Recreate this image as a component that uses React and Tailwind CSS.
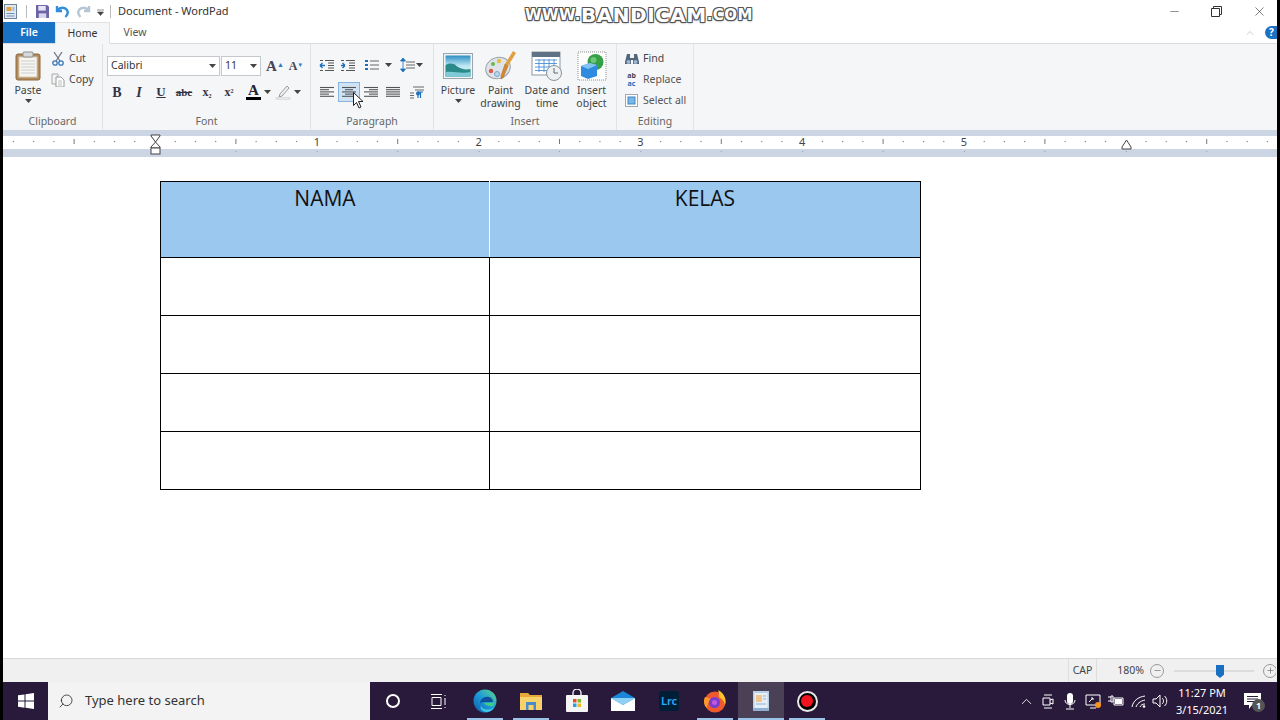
import React from 'react';
import { ChevronUp, Minus, Plus, Search, X } from 'lucide-react';

const ui = { fontFamily: '"Noto Sans", "Open Sans", sans-serif' };

function Caret({ className = '' }) {
  return (
    <svg width="7" height="4" viewBox="0 0 7 4" className={className}>
      <path d="M0 0h7L3.5 4z" fill="#444" />
    </svg>
  );
}

function Lines({ rows, color = '#555', w = 14 }) {
  return (
    <svg width={w} height="14" viewBox={`0 0 ${w} 14`}>
      {rows.map((r, i) => (
        <path key={i} d={`M${r[0]} ${2.5 + i * 2.2}H${r[1]}`} stroke={color} strokeWidth="1.1" />
      ))}
    </svg>
  );
}

function AlignIcon({ kind }) {
  const rows = {
    left: [[0, 14], [0, 9], [0, 14], [0, 9], [0, 14]],
    center: [[0, 14], [3, 11], [0, 14], [3, 11], [0, 14]],
    right: [[0, 14], [5, 14], [0, 14], [5, 14], [0, 14]],
    justify: [[0, 14], [0, 14], [0, 14], [0, 14], [0, 14]],
  }[kind];
  return <Lines rows={rows} />;
}

function Indent({ flip }) {
  return (
    <svg width="16" height="14" viewBox="0 0 16 14">
      <path d="M6 2.5h9M9 5h6M9 7.5h6M9 10h6M6 12.5h9M1 2.5h3M1 12.5h3" stroke="#555" strokeWidth="1" />
      <path d={flip ? 'M1 7.5h4M5 7.5L2.5 5M5 7.5L2.5 10' : 'M6 7.5H1M1 7.5L3.5 5M1 7.5L3.5 10'} stroke="#1c6fbd" strokeWidth="1.4" fill="none" />
    </svg>
  );
}

function ToolBtn({ children, w = 'w-[22px]', active }) {
  return (
    <div
      className={`flex h-5 shrink-0 items-center justify-center ${w} ${
        active ? 'border border-[#86b4dc] bg-[#cfe3f5]' : ''
      }`}
    >
      {children}
    </div>
  );
}

function GroupLabel({ children }) {
  return <div className="mt-auto pb-[2px] text-center text-[10.5px] leading-[14px] text-[#666]">{children}</div>;
}

function LargeButton({ icon, lines, caret, w }) {
  return (
    <div className={`flex shrink-0 flex-col items-center ${w}`}>
      <div className="flex h-[32px] items-center justify-center">{icon}</div>
      <div className="mt-[2px] text-center text-[10.5px] leading-[13px] text-[#444]">
        {lines.map((l) => (
          <div key={l}>{l}</div>
        ))}
        {caret && <Caret className="mx-auto mt-[2px]" />}
      </div>
    </div>
  );
}

function ClipboardIcon() {
  return (
    <svg width="26" height="30" viewBox="0 0 26 30">
      <rect x="1" y="3" width="24" height="26" rx="2" fill="#b48a58" stroke="#8c6a40" />
      <rect x="4" y="6" width="18" height="20" fill="#f7f5ee" stroke="#cfc8b8" />
      <path d="M6 10h14M6 13h14M6 16h14M6 19h14M6 22h14" stroke="#c9ced6" />
      <rect x="8" y="1" width="10" height="5" rx="1" fill="#d6d8da" stroke="#8f8f8f" />
    </svg>
  );
}

function PictureIcon() {
  return (
    <svg width="30" height="26" viewBox="0 0 30 26">
      <defs>
        <linearGradient id="sky" x1="0" y1="0" x2="0" y2="1">
          <stop offset="0" stopColor="#2f8fc4" />
          <stop offset="0.5" stopColor="#bfe8f2" />
          <stop offset="1" stopColor="#d9f2f2" />
        </linearGradient>
      </defs>
      <rect x="0.5" y="0.5" width="29" height="25" fill="#f2f4f5" stroke="#9aa5ad" />
      <rect x="2.500" y="2.500" width="25" height="21" fill="url(#sky)" />
      <path d="M2.500 12c4-2 8-2 11 1 4 3 9 4 14 3v7.500h-25z" fill="#2a8a8a" />
      <path d="M2.500 19c8-1 16 2 25 0v4.500h-25z" fill="#7fcad6" />
    </svg>
  );
}

function PaletteIcon() {
  return (
    <svg width="32" height="30" viewBox="0 0 32 30">
      <ellipse cx="13" cy="17" rx="12.500" ry="10.500" transform="rotate(-20 13 17)" fill="#dde3e8" stroke="#9aa2a8" />
      <circle cx="6" cy="20" r="2.200" fill="#e05a4a" />
      <circle cx="8" cy="13" r="2" fill="#6db84c" />
      <circle cx="14" cy="10" r="2.200" fill="#e8c040" />
      <circle cx="12" cy="23" r="2.500" fill="#bcd7ee" stroke="#7fa6c8" />
      <path d="M28 0l3 2-8 13-3-2z" fill="#e0a040" />
      <path d="M20 13l3 2-5 12-2 1 0-3z" fill="#d8882c" stroke="#a96a20" strokeWidth="0.5" />
    </svg>
  );
}

function DateIcon() {
  return (
    <svg width="32" height="30" viewBox="0 0 32 30">
      <rect x="1" y="1" width="28" height="23" fill="#fff" stroke="#8b98a4" />
      <rect x="1" y="1" width="28" height="5" fill="#5f7285" />
      <path d="M4 9h22M4 12.500h22M4 16h22M4 19.500h22M8 8v13M13 8v13M18 8v13M23 8v13" stroke="#4a8fd8" strokeWidth="0.9" />
      <circle cx="23" cy="22" r="7.500" fill="#eef1f3" stroke="#8b929a" />
      <path d="M23 17v5h4" stroke="#666" fill="none" />
    </svg>
  );
}

function ObjectIcon() {
  return (
    <svg width="30" height="30" viewBox="0 0 30 30">
      <rect x="1" y="1" width="28" height="28" fill="#fff" stroke="#8d8d8d" strokeDasharray="1 1" />
      <circle cx="18.500" cy="11" r="8" fill="#35a045" />
      <circle cx="16.500" cy="9" r="3" fill="#6cc878" />
      <path d="M4 15l9-3 7 2v11l-9 3-7-3z" fill="#2f8be0" />
      <path d="M4 15l7 3 9-4-7-2z" fill="#84c4f2" />
    </svg>
  );
}

function Ruler() {
  const x0 = 152;
  const inch = 161.8;
  const ticks = [];
  for (let i = -8; i <= 55; i++) {
    if (i % 8 === 0) continue;
    const x = x0 + (i * inch) / 8;
    if (x < 0 || x > 1274) continue;
    if (i % 4 === 0) ticks.push(<path key={i} d={`M${x} 9v5`} stroke="#777" />);
    else ticks.push(<circle key={i} cx={x} cy="11.5" r="0.7" fill="#888" />);
  }
  return (
    <svg width="1274" height="27" viewBox="0 0 1274 27" className="block">
      <rect width="1274" height="27" fill="#ccd5e3" />
      <rect y="6" width="1274" height="13" fill="#fff" />
      {ticks}
      {[1, 2, 3, 4, 5].map((n) => (
        <text key={n} x={x0 + n * inch} y="16" textAnchor="middle" fontSize="11" fill="#444" style={ui}>
          {n}
        </text>
      ))}
      {[0, 1, 2, 3, 4, 5, 6].map((n) => (
        <path key={n} d={`M${x0 + n * inch + 0.5} 21v1M${x0 + (n + 0.5) * inch} 21v1`} stroke="#99a" />
      ))}
      <path d="M148 5h9v1l-4.5 6-4.5-6z" fill="#fff" stroke="#444" />
      <path d="M148 18v-1l4.5-5 4.5 5v1z" fill="#fff" stroke="#444" />
      <rect x="148" y="18" width="9" height="6" fill="#fff" stroke="#444" />
      <path d="M1119 19v-2l4.5-7 4.5 7v2z" fill="#fff" stroke="#444" />
    </svg>
  );
}

function TitleBar() {
  return (
    <div className="flex h-[22px] items-center bg-white">
      <svg width="13" height="15" viewBox="0 0 13 15" className="ml-[1px]">
        <rect x="0.5" y="0.5" width="12" height="14" fill="#dfe9f4" stroke="#6f8197" />
        <rect x="2.500" y="3" width="5" height="4" fill="#e0a13d" />
        <path d="M2.500 9.500h8M2.500 12h8M8.500 4h2M8.500 6h2" stroke="#6f8fb4" />
      </svg>
      <div className="ml-[9px] h-[13px] w-px bg-[#bbb]" />
      <svg width="13" height="13" viewBox="0 0 14 14" className="ml-[9px]">
        <path d="M0 0h12l2 2v12H0z" fill="#6b62a8" />
        <rect x="2.5" y="1" width="8" height="5" fill="#e6e6f2" />
        <rect x="3" y="9" width="8" height="5" fill="#d7d5ea" />
      </svg>
      <svg width="15" height="14" viewBox="0 0 15 14" className="ml-[6px]">
        <path d="M2 2v5h5M2.500 6.500C5 3 10 3 12 6c1.500 2.500.5 5-1.500 7" stroke="#2f8fdc" strokeWidth="2.400" fill="none" />
      </svg>
      <svg width="15" height="14" viewBox="0 0 15 14" className="ml-[6px]">
        <path d="M13 2v5H8M12.500 6.500C10 3 5 3 3 6c-1.500 2.500-.5 5 1.500 7" stroke="#b7c6d4" strokeWidth="2.400" fill="none" />
      </svg>
      <svg width="7" height="7" viewBox="0 0 7 7" className="ml-[6px] mt-[2px]">
        <path d="M0 1h7M0.500 3h6l-3 3.500z" fill="#444" stroke="#444" strokeWidth="0.6" />
      </svg>
      <div className="ml-[6px] h-[13px] w-px bg-[#bbb]" />
      <div className="ml-[7px] text-[11px] text-[#333]">Document - WordPad</div>
      <div className="ml-auto flex items-center">
        <div className="flex w-[42px] justify-center">
          <Minus size={13} strokeWidth={1.2} color="#555" />
        </div>
        <div className="flex w-[42px] justify-center">
          <svg width="11" height="11" viewBox="0 0 11 11">
            <path d="M2.500 2.500V.5h8v8H8.500M.5 2.500h8v8h-8z" fill="none" stroke="#333" />
          </svg>
        </div>
        <div className="ml-[4px] flex w-[36px] justify-center">
          <X size={15} strokeWidth={1} color="#333" />
        </div>
      </div>
    </div>
  );
}

function Tabs() {
  return (
    <div className="flex h-[22px] items-stretch border-b border-[#dadbdc] bg-white text-[10.5px]">
      <div className="flex w-[52px] items-center justify-center bg-[#1a72c4] font-semibold text-white">File</div>
      <div className="mb-[-1px] flex w-[55px] items-center justify-center border-x border-t border-[#e1e2e3] bg-[#f5f6f7] text-[#333]">
        Home
      </div>
      <div className="flex w-[50px] items-center justify-center text-[#555]">View</div>
      <div className="ml-auto flex items-center gap-[9px]">
        <ChevronUp size={12} strokeWidth={1.2} color="#aaa" />
        <div className="flex h-[13px] w-[12px] items-center justify-center overflow-hidden rounded-l-full bg-[#1b72c2] pl-[1px] text-[10px] font-bold text-white">
          ?
        </div>
      </div>
    </div>
  );
}

function RibbonGroup({ w, children, label }) {
  return (
    <div className={`flex h-full shrink-0 flex-col border-r border-[#e2e3e4] ${w}`}>
      <div className="min-h-0">{children}</div>
      <GroupLabel>{label}</GroupLabel>
    </div>
  );
}

function SmallCmd({ icon, label, muted }) {
  return (
    <div className={`flex h-[21px] items-center gap-[4px] text-[10.5px] ${muted ? 'text-[#555]' : 'text-[#444]'}`}>
      <span className="flex w-[15px] justify-center">{icon}</span>
      {label}
    </div>
  );
}

function Ribbon() {
  return (
    <div className="flex h-[86px] bg-[#f5f6f7]">
      <RibbonGroup w="w-[100px]" label="Clipboard">
        <div className="flex pl-[10px] pt-[6px]">
          <LargeButton w="w-[30px]" icon={<ClipboardIcon />} lines={['Paste']} caret />
          <div className="ml-[7px] -mt-[2px]">
            <SmallCmd
              label="Cut"
              icon={
                <svg width="12" height="14" viewBox="0 0 12 14">
                  <path d="M2 0l6 9M10 0L4 9" stroke="#778" strokeWidth="1.300" />
                  <circle cx="3" cy="11" r="2.200" fill="none" stroke="#3a78b8" strokeWidth="1.300" />
                  <circle cx="9" cy="11" r="2.200" fill="none" stroke="#3a78b8" strokeWidth="1.300" />
                </svg>
              }
            />
            <SmallCmd
              label="Copy"
              icon={
                <svg width="14" height="14" viewBox="0 0 14 14">
                  <path d="M1 1h6v10H1z" fill="#f4f4f4" stroke="#aaa" />
                  <path d="M5 4h5l3 3v7H5z" fill="#fff" stroke="#999" />
                  <path d="M7 8h4M7 10h4M7 12h4" stroke="#bbb" />
                </svg>
              }
            />
          </div>
        </div>
      </RibbonGroup>

      <RibbonGroup w="w-[208px]" label="Font">
        <div className="pl-[4px] pt-[12px]">
          <div className="flex h-[20px] items-center">
            <div className="flex h-[20px] w-[113px] items-center justify-between border border-[#c5c9cd] bg-white pl-[3px] pr-[3px] text-[10.5px] text-[#333]">
              Calibri
              <Caret />
            </div>
            <div className="ml-[1px] flex h-[20px] w-[40px] items-center justify-between border border-[#c5c9cd] bg-white pl-[3px] pr-[3px] text-[10.5px] text-[#333]">
              11
              <Caret />
            </div>
            <div className="ml-[4px] w-[20px] text-center font-['Liberation_Serif',serif] text-[15px] font-bold text-[#445]">
              A<sup className="text-[7px] text-[#2b7bc0]">▲</sup>
            </div>
            <div className="ml-[1px] w-[20px] text-center font-['Liberation_Serif',serif] text-[12px] font-bold text-[#445]">
              A<sup className="text-[6px] text-[#2b7bc0]">▼</sup>
            </div>
          </div>
          <div className="-ml-[1px] mt-[6px] flex h-5 items-center font-['Liberation_Serif',serif] text-[#334]">
            <ToolBtn><span className="text-[14px] font-bold">B</span></ToolBtn>
            <ToolBtn><span className="text-[14px] font-bold italic">I</span></ToolBtn>
            <ToolBtn><span className="text-[13px] font-bold underline">U</span></ToolBtn>
            <ToolBtn w="w-[24px]"><span className="text-[11px] font-bold line-through">abc</span></ToolBtn>
            <ToolBtn><span className="text-[12px] font-bold">x<sub className="text-[6px]">2</sub></span></ToolBtn>
            <ToolBtn><span className="text-[12px] font-bold">x<sup className="text-[6px]">2</sup></span></ToolBtn>
            <div className="ml-[1px] flex w-[32px] items-center gap-[3px] pl-[5px]">
              <div className="flex flex-col items-center">
                <span className="text-[15px] font-bold leading-[13px] text-[#223]">A</span>
                <div className="h-[3px] w-[15px] bg-black" />
              </div>
              <Caret />
            </div>
            <div className="ml-[2px] flex items-center gap-[3px]">
              <svg width="16" height="16" viewBox="0 0 16 16">
                <path d="M5 10l7-8 2 2-7 8-3 1z" fill="#f2f2f2" stroke="#9a9a9a" />
                <rect x="1" y="13.500" width="14" height="2" fill="#e9e9e9" stroke="#ccc" strokeWidth="0.5" />
              </svg>
              <Caret />
            </div>
          </div>
        </div>
      </RibbonGroup>

      <RibbonGroup w="w-[123px]" label="Paragraph">
        <div className="pl-[5px] pt-[11px]">
          <div className="flex h-5 items-center">
            <ToolBtn w="w-[21px]"><Indent /></ToolBtn>
            <ToolBtn w="w-[21px]"><Indent flip /></ToolBtn>
            <div className="ml-[4px] flex w-[37px] items-center gap-[6px] pl-[3px]">
              <svg width="14" height="12" viewBox="0 0 14 12">
                <path d="M5 2h9M5 6h9M5 10h9" stroke="#666" />
                <path d="M0 1h3v2H0zM0 5h3v2H0zM0 9h3v2H0z" fill="#1c6fbd" />
              </svg>
              <Caret />
            </div>
            <div className="flex items-center gap-[1px] pl-[1px]">
              <svg width="15" height="14" viewBox="0 0 15 14">
                <path d="M6 4h9M6 7h9M6 10h9" stroke="#666" />
                <path d="M3 0l2.500 3h-5zM3 14l2.500-3h-5zM3 3v8" fill="#1c6fbd" stroke="#1c6fbd" strokeWidth="0.8" />
              </svg>
              <Caret />
            </div>
          </div>
          <div className="mt-[7px] flex h-5 items-center">
            <ToolBtn><AlignIcon kind="left" /></ToolBtn>
            <ToolBtn active><AlignIcon kind="center" /></ToolBtn>
            <ToolBtn><AlignIcon kind="right" /></ToolBtn>
            <ToolBtn><AlignIcon kind="justify" /></ToolBtn>
            <ToolBtn w="w-[26px]">
              <svg width="14" height="14" viewBox="0 0 14 14">
                <path d="M3 2h11M5 5h9M0 8h4M0 10.500h4M0 13h4" stroke="#666" />
                <path d="M8 13V7h5M10.500 13V7" stroke="#1c6fbd" strokeWidth="1.200" fill="none" />
                <circle cx="8" cy="8.500" r="2" fill="#1c6fbd" />
              </svg>
            </ToolBtn>
          </div>
        </div>
      </RibbonGroup>

      <RibbonGroup w="w-[183px]" label="Insert">
        <div className="flex pl-[2px] pt-[6px]">
          <LargeButton w="w-[44px]" icon={<PictureIcon />} lines={['Picture']} caret />
          <LargeButton w="w-[41px]" icon={<PaletteIcon />} lines={['Paint', 'drawing']} />
          <LargeButton w="w-[52px]" icon={<DateIcon />} lines={['Date and', 'time']} />
          <LargeButton w="w-[37px]" icon={<ObjectIcon />} lines={['Insert', 'object']} />
        </div>
      </RibbonGroup>

      <RibbonGroup w="w-[77px]" label="Editing">
        <div className="pl-[7px] pt-[4px]">
          <SmallCmd
            label="Find"
            icon={
              <svg width="14" height="12" viewBox="0 0 14 12">
                <path d="M2 1h3v4h4V1h3l2 8v2H8V7H6v4H0V9z" fill="#51657c" />
                <circle cx="3.500" cy="9" r="2" fill="#9fb8cf" />
                <circle cx="10.500" cy="9" r="2" fill="#9fb8cf" />
              </svg>
            }
          />
          <SmallCmd
            muted
            label="Replace"
            icon={
              <span className="flex flex-col items-center text-[7px] font-bold text-[#445]">
                <span className="h-[8px] leading-[8px]">ab</span>
                <span className="h-[8px] leading-[8px] text-[#1c6fbd]">ac</span>
              </span>
            }
          />
          <SmallCmd
            muted
            label="Select all"
            icon={
              <svg width="13" height="13" viewBox="0 0 13 13">
                <rect x="0.500" y="0.500" width="12" height="12" fill="#fff" stroke="#456" strokeDasharray="1 1" />
                <rect x="3" y="3" width="7" height="7" fill="#79b7e6" stroke="#3f86c4" />
              </svg>
            }
          />
        </div>
      </RibbonGroup>
    </div>
  );
}

function DocTable() {
  const rows = [0, 1, 2, 3];
  return (
    <table className="ml-[157px] mt-[24px] w-[761px] table-fixed border-collapse text-[#111]" style={{ fontFamily: '"Open Sans", sans-serif' }}>
      <colgroup>
        <col className="w-[329px]" />
        <col />
      </colgroup>
      <thead>
        <tr className="h-[76px] bg-[#9bc8ee]">
          <th className="border border-black border-r-white pt-[1px] align-top text-[21px] font-normal leading-[30px]">NAMA</th>
          <th className="border border-black pt-[1px] align-top text-[21px] font-normal leading-[30px]">KELAS</th>
        </tr>
      </thead>
      <tbody>
        {rows.map((r) => (
          <tr key={r} className="h-[58px]">
            <td className="border border-black" />
            <td className="border border-black" />
          </tr>
        ))}
      </tbody>
    </table>
  );
}

function StatusBar() {
  return (
    <div className="flex h-[24px] items-stretch justify-end border-t border-[#d8d8d8] bg-[#f0f0f0] text-[10.5px] text-[#444]">
      <div className="flex w-[29px] items-center justify-center border-x border-[#dedede] pt-[1px]">CAP</div>
      <div className="flex w-[47px] items-center justify-end pt-[1px]">180%</div>
      <div className="ml-[6px] flex items-center">
        <div className="flex h-[14px] w-[14px] items-center justify-center rounded-full border border-[#999]">
          <Minus size={9} strokeWidth={1.5} color="#555" />
        </div>
      </div>
      <div className="relative ml-[10px] flex w-[80px] items-center">
        <div className="h-[2px] w-full bg-[#dcdcdc]" />
        <div className="absolute left-[42px] top-[6px] h-[13px] w-[8px] bg-[#1a6fc0] [clip-path:polygon(0_0,100%_0,100%_75%,50%_100%,0_75%)]" />
      </div>
      <div className="ml-[9px] mr-[1px] flex w-[13px] items-center overflow-hidden">
        <div className="flex h-[14px] w-[14px] shrink-0 items-center justify-center rounded-full border border-[#999]">
          <Plus size={9} strokeWidth={1.5} color="#555" />
        </div>
      </div>
    </div>
  );
}

function TaskIcon({ children, indicator, active }) {
  return (
    <div className={`relative flex h-full w-[46px] shrink-0 items-center justify-center ${active ? 'bg-[#4a4156]' : ''}`}>
      {children}
      {indicator && <div className={`absolute bottom-0 h-[2px] bg-[#99c4e8] ${active ? 'inset-x-0' : 'inset-x-[5px]'}`} />}
    </div>
  );
}

function Taskbar() {
  return (
    <div className="flex h-[38px] items-stretch bg-[#291a3b]">
      <div className="flex w-[45px] items-center justify-center">
        <svg width="16" height="16" viewBox="0 0 16 16">
          <path d="M0 2.300L6.500 1.400v6.200H0zM7.500 1.200L16 0v7.600H7.500zM0 8.500h6.500v6.200L0 13.800zM7.500 8.500H16V16l-8.500-1.200z" fill="#fff" />
        </svg>
      </div>
      <div className="flex w-[322px] items-center bg-[#f3f3f3] pl-[10px] text-[13px] text-[#333]">
        <Search size={16} strokeWidth={1.2} color="#222" className="-scale-x-100" />
        <span className="ml-[11px]">Type here to search</span>
      </div>
      <TaskIcon>
        <div className="h-[14px] w-[14px] rounded-full border-2 border-white" />
      </TaskIcon>
      <TaskIcon>
        <svg width="16" height="15" viewBox="0 0 16 15">
          <path d="M0 .5h11M0 14.500h11M1 3.500h9v8H1zM14 1v1M14 4v7M14 13v1" stroke="#fff" fill="none" />
        </svg>
      </TaskIcon>
      <TaskIcon indicator>
        <svg width="24" height="24" viewBox="0 0 24 24">
          <defs>
            <linearGradient id="edge" x1="0" y1="1" x2="1" y2="0">
              <stop offset="0" stopColor="#0e5cab" />
              <stop offset="0.5" stopColor="#1d9bd8" />
              <stop offset="1" stopColor="#5ed98a" />
            </linearGradient>
          </defs>
          <circle cx="12" cy="12" r="11.500" fill="url(#edge)" />
          <path d="M7 15c0-5 4-8 9-7 3 .5 4 3 4 5H10c-1.500 0-3 1-3 2z" fill="#0f4f9c" />
          <path d="M8 17c1 3 6 5 13 2-3 4-8 5-11 3-2-1-3-3-2-5z" fill="#42c8e6" />
          <path d="M11 14h10c0 2-1 3-3 3-3 0-6-1-7-3z" fill="#3fd07f" />
        </svg>
      </TaskIcon>
      <TaskIcon indicator>
        <svg width="22" height="18" viewBox="0 0 22 18">
          <path d="M0 1h8l2 2h12v15H0z" fill="#e8a93a" />
          <path d="M0 5h22v13H0z" fill="#f7d26a" />
          <path d="M6 10h10v8h-2.500v-5h-5v5H6z" fill="#4a8cc9" />
        </svg>
      </TaskIcon>
      <TaskIcon>
        <svg width="22" height="24" viewBox="0 0 22 24">
          <path d="M7 7V4a4 4 0 018 0v3" stroke="#eee" fill="none" strokeWidth="1.400" />
          <rect y="6" width="22" height="17" rx="1" fill="#f5f5f5" />
          <rect x="7" y="10" width="3.500" height="3.500" fill="#e2502f" />
          <rect x="11.500" y="10" width="3.500" height="3.500" fill="#7fba2a" />
          <rect x="7" y="14.500" width="3.500" height="3.500" fill="#2a9fe0" />
          <rect x="11.500" y="14.500" width="3.500" height="3.500" fill="#f5b81c" />
        </svg>
      </TaskIcon>
      <TaskIcon>
        <svg width="24" height="20" viewBox="0 0 24 20">
          <path d="M0 7L12 0l12 7v13H0z" fill="#1a86d8" />
          <path d="M0 7l12 7 12-7v13H0z" fill="#fff" />
          <path d="M0 7l12 7 12-7" fill="#8fd0f5" />
        </svg>
      </TaskIcon>
      <TaskIcon>
        <div className="flex h-[20px] w-[20px] items-center justify-center rounded-[3px] bg-[#001e36] text-[11px] font-semibold text-[#31a8ff]">
          Lrc
        </div>
      </TaskIcon>
      <TaskIcon indicator>
        <svg width="24" height="24" viewBox="0 0 24 24">
          <circle cx="12" cy="13" r="10.500" fill="#ee5a2e" />
          <path d="M15 1c6 3 9 9 7 15-1-4-3-6-6-8 0-3 0-5-1-7z" fill="#ffc32c" />
          <path d="M2 8c-2 4-1 9 2 11 0-4 2-7 5-9z" fill="#ff9a2a" />
          <circle cx="11.500" cy="13.500" r="5.500" fill="#7a3bd0" />
          <circle cx="11.500" cy="13.500" r="2.500" fill="#c05ad8" />
        </svg>
      </TaskIcon>
      <TaskIcon active indicator>
        <svg width="16" height="20" viewBox="0 0 16 20">
          <rect width="16" height="20" fill="#b9cfe6" />
          <rect x="1.500" y="2" width="13" height="15" fill="#e6eff8" />
          <rect x="3" y="4" width="6" height="7" fill="#f0c48a" />
          <path d="M10 5h3M10 8h3M3 13h10" stroke="#8fb0d0" />
          <path d="M0 18l1.500-1h13l1.500 1v2H0z" fill="#8fb0d0" />
        </svg>
      </TaskIcon>
      <TaskIcon indicator>
        <div className="flex h-[21px] w-[21px] items-center justify-center rounded-full border-2 border-[#e8e8e8] bg-black">
          <div className="h-[12px] w-[12px] rounded-full bg-[#f0141e]" />
        </div>
      </TaskIcon>

      <div className="ml-auto flex items-center text-white">
        <ChevronUp size={17} strokeWidth={1.2} className="mr-[7px]" />
        <svg width="12" height="15" viewBox="0 0 12 15" className="mr-[10px]">
          <path d="M2 1h8M2 14h8M1 4h7v7H1zM8 6l3-1v5l-3-1" stroke="#fff" fill="none" />
        </svg>
        <svg width="12" height="17" viewBox="0 0 12 17" className="mr-[9px]">
          <rect x="3" y="0" width="6" height="11" rx="3" fill="#fff" />
          <path d="M1 7c0 6 10 6 10 0M6 12v3M2 16h8" stroke="#fff" fill="none" />
        </svg>
        <svg width="16" height="16" viewBox="0 0 16 16" className="mr-[7px]">
          <path d="M1 2h14v10H1zM5 15h6" stroke="#fff" fill="none" />
          <path d="M4 9l4-4M6 5h2v2" stroke="#fff" fill="none" />
          <circle cx="13" cy="12" r="3" fill="#f7941d" />
        </svg>
        <svg width="16" height="12" viewBox="0 0 16 12" className="mr-[7px]">
          <path d="M6 3h9v7H6zM0 2h3M0 6h3M3 1h2v6H3z" stroke="#fff" fill="none" />
          <path d="M7 4h7v5H7z" fill="#fff" />
        </svg>
        <svg width="16" height="13" viewBox="0 0 16 13" className="mr-[5px]">
          <path d="M1 12C2 6 7 2 14 1M5 12c1-3 4-6 9-7M9 12c1-2 2-3 5-3" stroke="#fff" fill="none" />
          <circle cx="13" cy="11.500" r="1.300" fill="#fff" />
        </svg>
        <svg width="16" height="14" viewBox="0 0 16 14" className="mr-[3px]">
          <path d="M1 5h3l4-4v12L4 9H1zM10 4c2 1.500 2 4.500 0 6M12.500 2c3 2.500 3 7.500 0 10" stroke="#fff" fill="none" />
        </svg>
        <div className="w-[62px] text-center text-[11px] leading-[17px]">
          <div>11:27 PM</div>
          <div>3/15/2021</div>
        </div>
        <div className="relative ml-[6px] mr-[12px] flex w-[26px] justify-center">
          <svg width="17" height="16" viewBox="0 0 17 16">
            <path d="M0 0h17v12H8l-3 4v-4H0z" fill="#fff" />
            <path d="M3 3.500h11M3 6h11M3 8.500h7" stroke="#291a3b" />
          </svg>
          <div className="absolute left-[13px] top-[6px] flex h-[13px] w-[13px] items-center justify-center rounded-full bg-[#555] text-[9px] font-bold">
            1
          </div>
        </div>
      </div>
    </div>
  );
}

export default function App() {
  return (
    <div className="relative flex h-[720px] w-[1280px] overflow-hidden bg-black" style={ui}>
      <div className="ml-[3px] flex h-full w-[1274px] flex-col">
        <TitleBar />
        <Tabs />
        <Ribbon />
        <Ruler />
        <div className="h-[501px] bg-white">
          <DocTable />
        </div>
        <StatusBar />
        <Taskbar />
      </div>

      {/* recorder watermark */}
      <div
        className="absolute left-[522px] top-[2px] flex h-[26px] w-[234px] items-center justify-center whitespace-nowrap font-bold tracking-[0.5px] text-white [text-shadow:1px_1px_0_#555,-1px_-1px_0_#555,1px_-1px_0_#555,-1px_1px_0_#555,0_1px_2px_#555]"
        style={{ fontFamily: '"DejaVu Sans", sans-serif' }}
      >
        <span className="text-[15px]">WWW.</span>
        <span className="text-[20px] leading-none">BANDICAM</span>
        <span className="text-[15px]">.COM</span>
      </div>

      {/* mouse cursor */}
      <svg width="12" height="17" viewBox="0 0 12 17" className="absolute left-[353px] top-[92px]">
        <path d="M.5.5v13l3-3 2.500 5.500 2-1-2.500-5.500H10z" fill="#fff" stroke="#222" />
      </svg>
    </div>
  );
}
